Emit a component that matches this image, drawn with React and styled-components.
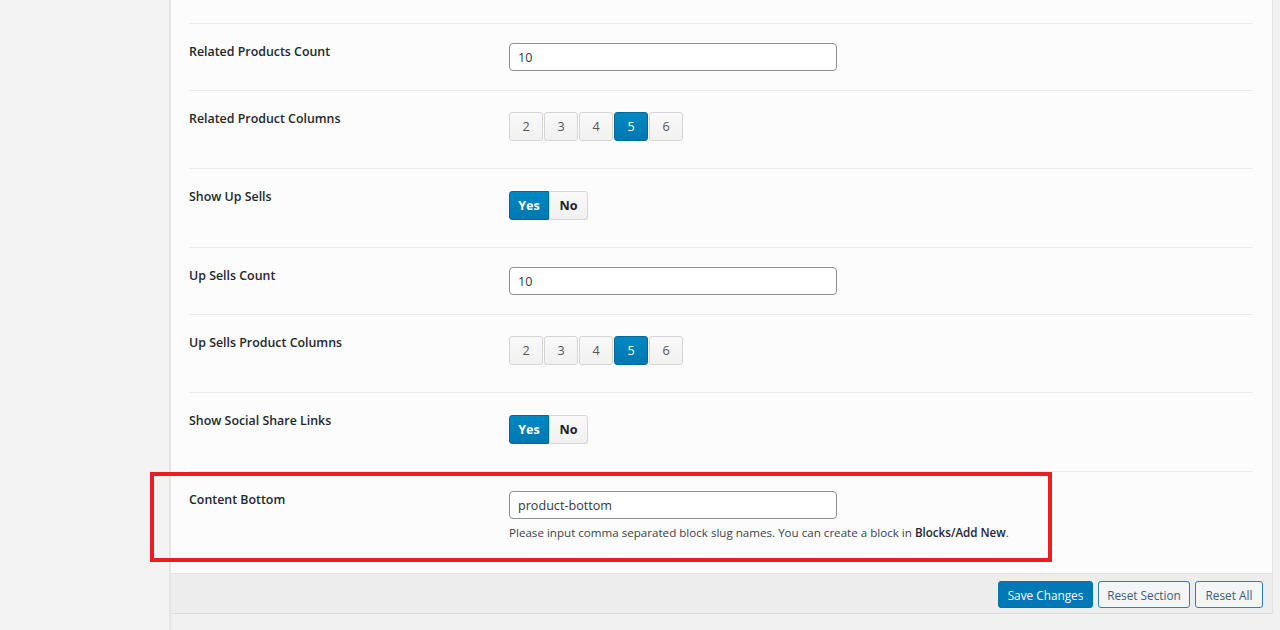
import React from "react";
import styled, { createGlobalStyle } from "styled-components";

const GlobalStyle = createGlobalStyle`
  html, body {
    margin: 0;
    padding: 0;
    background: #f1f1f1;
  }
  body {
    font-family: "Open Sans", "Noto Sans", Arial, sans-serif;
    font-size: 13px;
    color: #23282d;
  }
`;

const Page = styled.div`
  display: flex;
  min-height: 630px;
`;

const Sidebar = styled.aside`
  width: 169px;
  flex: none;
  background: #f3f3f3;
  border-right: 2px solid #e4e4e4;
`;

const Main = styled.div`
  width: 1101px;
  flex: none;
  display: flex;
  flex-direction: column;
  border-right: 1px solid #e2e2e2;
  align-self: flex-start;
`;

const Panel = styled.div`
  background: #fcfcfc;
  padding: 0 19px 13px 18px;
`;

const Cut = styled.div`
  height: 23px;
  border-bottom: 1px solid #ebebeb;
`;

const Row = styled.div`
  position: relative;
  display: flex;
  padding: ${(p) => (p.$seg ? "19px 0 27px" : "19px 0")};
  border-bottom: ${(p) => (p.$last ? "none" : "1px solid #ebebeb")};
`;

const Label = styled.div`
  width: 320px;
  flex: none;
  font-weight: 600;
  font-size: 12.4px;
  line-height: 18px;
  color: #23282d;
`;

const Field = styled.div`
  display: flex;
  flex-direction: column;
`;

const Input = styled.input`
  box-sizing: border-box;
  width: 328px;
  height: 28px;
  padding: 0 8px;
  border: 1px solid #8c8f94;
  border-radius: 4px;
  background: #fff;
  font-family: inherit;
  font-size: 12.6px;
  color: #32373c;
  outline: none;
`;

const Help = styled.p`
  margin: 6px 0 0;
  font-size: 11.6px;
  line-height: 16px;
  color: #3c434a;

  strong {
    font-weight: 600;
    color: #23282d;
  }
`;

const SegGroup = styled.div`
  display: flex;
  gap: ${(p) => (p.$joined ? "0" : "1px")};
  margin-top: ${(p) => (p.$joined ? "3px" : "2px")};
`;

const SegButton = styled.button`
  box-sizing: border-box;
  height: 29px;
  width: ${(p) => p.$w || "34px"};
  padding: 0;
  font-family: inherit;
  font-size: 12.6px;
  font-weight: ${(p) => (p.$joined ? 700 : 400)};
  border: 1px solid ${(p) => (p.$active ? "#006799" : "#d5d5d5")};
  border-radius: ${(p) => p.$radius || "3px"};
  background: ${(p) =>
    p.$active
      ? "linear-gradient(#0088c2, #0077b0)"
      : "linear-gradient(#f9f9f9, #f1f1f1)"};
  color: ${(p) => (p.$active ? "#fff" : p.$joined ? "#222" : "#555")};
  cursor: pointer;
`;

const Annotation = styled.div`
  position: absolute;
  left: -39px;
  top: 0;
  width: 902px;
  height: 90px;
  box-sizing: border-box;
  border: 4px solid #ea1c24;
  pointer-events: none;
`;

const Footer = styled.div`
  height: 41px;
  box-sizing: border-box;
  background: #ededed;
  border-top: 1px solid #e2e2e2;
  border-bottom: 1px solid #dcdcdc;
  display: flex;
  justify-content: flex-end;
  align-items: center;
  gap: 5px;
  padding: 2px 9px 0 0;
`;

const ActionButton = styled.button`
  box-sizing: border-box;
  height: 27px;
  width: ${(p) => p.$w};
  padding: 0;
  font-family: inherit;
  font-size: 11.8px;
  border-radius: 3px;
  border: 1px solid ${(p) => (p.$primary ? "#0073aa" : "#2f7fb0")};
  background: ${(p) => (p.$primary ? "#0079b6" : "#f3f5f6")};
  color: ${(p) => (p.$primary ? "#fff" : "#3a5f7d")};
  cursor: pointer;
`;

const ColumnPicker = ({ value }) => (
  <SegGroup>
    {[2, 3, 4, 5, 6].map((n) => (
      <SegButton key={n} $active={n === value}>
        {n}
      </SegButton>
    ))}
  </SegGroup>
);

const YesNo = ({ value }) => (
  <SegGroup $joined>
    <SegButton $joined $w="40px" $active={value} $radius="3px 0 0 3px">
      Yes
    </SegButton>
    <SegButton $joined $w="39px" $active={!value} $radius="0 3px 3px 0">
      No
    </SegButton>
  </SegGroup>
);

export default function App() {
  return (
    <>
      <GlobalStyle />
      <Page>
        <Sidebar />
        <Main>
          <Panel>
            <Cut />
            <Row>
              <Label>Related Products Count</Label>
              <Input defaultValue="10" />
            </Row>
            <Row $seg>
              <Label>Related Product Columns</Label>
              <ColumnPicker value={5} />
            </Row>
            <Row $seg>
              <Label>Show Up Sells</Label>
              <YesNo value={true} />
            </Row>
            <Row>
              <Label>Up Sells Count</Label>
              <Input defaultValue="10" />
            </Row>
            <Row $seg>
              <Label>Up Sells Product Columns</Label>
              <ColumnPicker value={5} />
            </Row>
            <Row $seg>
              <Label>Show Social Share Links</Label>
              <YesNo value={true} />
            </Row>
            <Row $last>
              <Label>Content Bottom</Label>
              <Field>
                <Input defaultValue="product-bottom" />
                <Help>
                  Please input comma separated block slug names. You can create a block in{" "}
                  <strong>Blocks/Add New</strong>.
                </Help>
              </Field>
              <Annotation />
            </Row>
          </Panel>
          <Footer>
            <ActionButton $primary $w="95px">Save Changes</ActionButton>
            <ActionButton $w="92px">Reset Section</ActionButton>
            <ActionButton $w="68px">Reset All</ActionButton>
          </Footer>
        </Main>
      </Page>
    </>
  );
}
